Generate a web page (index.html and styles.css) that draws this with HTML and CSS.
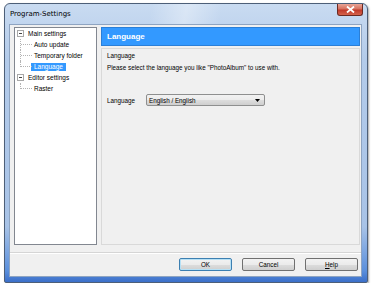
FILE: index.html
```html
<!DOCTYPE html>
<html lang="en">
<head>
    <meta charset="UTF-8">
    <title>Program-Settings</title>
    <link rel="stylesheet" href="styles.css">
</head>
<body>
    <div class="window">
        <!-- Title bar -->
        <div class="titlebar">
            <span class="title">Program-Settings</span>
            <span class="close">
                <svg width="9" height="7" viewBox="0 0 9 7"><path d="M1 0.5 L8 6.5 M8 0.5 L1 6.5" stroke="#fff" stroke-width="1.8"/></svg>
            </span>
        </div>

        <div class="client">
            <div class="main">
                <!-- Tree -->
                <div class="tree">
                    <div class="node"><span class="toggle"></span><span class="label">Main settings</span></div>
                    <div class="children">
                        <div class="child"><span class="label">Auto update</span></div>
                        <div class="child"><span class="label">Temporary folder</span></div>
                        <div class="child"><span class="label selected">Language</span></div>
                    </div>
                    <div class="node"><span class="toggle"></span><span class="label">Editor settings</span></div>
                    <div class="children">
                        <div class="child"><span class="label">Raster</span></div>
                    </div>
                </div>

                <!-- Page -->
                <div class="page">
                    <div class="banner">Language</div>
                    <div class="box">
                        <div class="group-title">Language</div>
                        <p class="hint">Please select the language you like "PhotoAlbum" to use with.</p>
                        <div class="field">
                            <span class="field-label">Language</span>
                            <div class="combo">
                                <span>English / English</span>
                                <svg width="5" height="3" viewBox="0 0 5 3"><path d="M0 0 H5 L2.5 3 Z" fill="#000"/></svg>
                            </div>
                        </div>
                    </div>
                </div>
            </div>

            <div class="footer">
                <button class="btn default">OK</button>
                <button class="btn">Cancel</button>
                <button class="btn"><u>H</u>elp</button>
            </div>
        </div>
    </div>
</body>
</html>
```

FILE: styles.css
```css
body {
    margin: 0;
    padding: 3px 0 0 4px;
    background: #ffffff;
    font-family: "Liberation Sans", Arial, sans-serif;
    overflow: hidden;
}

.window {
    width: 364px;
    height: 280px;
    box-sizing: border-box;
    padding: 0 5px 5px 4px;
    border: 1px solid #4d5f78;
    border-radius: 6px 6px 2px 2px;
    background: linear-gradient(180deg, #c9dbf1 0%, #b3cbea 20%, #a8c3e7 80%, #5a8fdc 96%, #3b6fc9 100%);
    box-shadow: 1px 1px 2px rgba(0, 0, 0, 0.35);
    display: flex;
    flex-direction: column;
}

.titlebar {
    height: 20px;
    display: flex;
    align-items: flex-start;
    justify-content: space-between;
    background: linear-gradient(100deg, transparent 40%, rgba(255, 255, 255, 0.35) 50%, transparent 60%);
}

.title {
    font-family: "DejaVu Sans", sans-serif;
    font-size: 7px;
    color: #000;
    margin-top: 6px;
    margin-left: 1px;
}

.close {
    width: 26px;
    height: 12px;
    margin-right: -1px;
    box-sizing: border-box;
    border: 1px solid #6b2a22;
    border-top: none;
    border-radius: 0 0 3px 3px;
    background: linear-gradient(180deg, #e8a597 0%, #d7705d 45%, #c0392a 55%, #d5634c 100%);
    display: flex;
    align-items: center;
    justify-content: center;
}

.client {
    flex: 1;
    background: #f0f0f0;
    border: 1px solid #8ea4c1;
    display: flex;
    flex-direction: column;
}

.main {
    display: flex;
    gap: 4px;
    padding: 2px 1px 0 4px;
    height: 218px;
}

.tree {
    width: 83px;
    box-sizing: border-box;
    background: #ffffff;
    border: 1px solid #828790;
    font-size: 6.5px;
    color: #000;
}

.node {
    height: 11px;
    display: flex;
    align-items: center;
}

.toggle {
    width: 7px;
    height: 7px;
    box-sizing: border-box;
    border: 1px solid #a8a8a8;
    margin-left: 2px;
    margin-right: 3px;
    position: relative;
    background: #fff;
}

.toggle::after {
    content: '';
    position: absolute;
    left: 1px;
    top: 2px;
    width: 3px;
    height: 1px;
    background: #444;
}

.children {
    padding-left: 5px;
}

.child {
    height: 11px;
    display: flex;
    align-items: center;
    padding-left: 14px;
    position: relative;
}

.child::before {
    content: '';
    position: absolute;
    left: 0;
    top: 0;
    height: 100%;
    border-left: 1px dotted #b4b4b4;
}

.child:last-child::before {
    height: 50%;
}

.child::after {
    content: '';
    position: absolute;
    left: 1px;
    top: 5px;
    width: 11px;
    border-top: 1px dotted #b4b4b4;
}

.label {
    white-space: nowrap;
    line-height: 8px;
    padding: 0 1px;
}

.child .label {
    margin-left: -3px;
    padding: 0 3px;
}

.selected {
    background: #3399ff;
    color: #fff;
}

.page {
    flex: 1;
    display: flex;
    flex-direction: column;
    gap: 2px;
}

.banner {
    height: 19px;
    box-sizing: border-box;
    background: #3399ff;
    border: 1px solid #2a7fd8;
    color: #fff;
    font-weight: bold;
    font-size: 8px;
    padding: 4px 0 0 5px;
}

.box {
    flex: 1;
    border: 1px solid #d9d9d9;
    padding: 2px 5px;
    font-size: 6.3px;
    color: #000;
}

.group-title {
    margin-top: 1px;
}

.hint {
    margin: 5px 0 0;
}

.field {
    display: flex;
    align-items: center;
    margin-top: 23px;
}

.field-label {
    width: 39px;
}

.combo {
    width: 119px;
    height: 12px;
    box-sizing: border-box;
    border: 1px solid #8e8f8f;
    border-radius: 2px;
    background: linear-gradient(180deg, #f2f2f2 0%, #ebebeb 50%, #dddddd 51%, #cfcfcf 100%);
    display: flex;
    align-items: center;
    justify-content: space-between;
    padding: 0 4px 0 2px;
}

.footer {
    flex: 1;
    margin-top: 7px;
    border-top: 1px solid #d5d5d5;
    box-shadow: inset 0 1px 0 #ffffff;
    display: flex;
    justify-content: flex-end;
    align-items: flex-start;
    gap: 10px;
    padding: 5px 3px 0 0;
}

.btn {
    width: 53px;
    height: 13px;
    padding: 0;
    font-family: "Liberation Sans", Arial, sans-serif;
    font-size: 6.3px;
    color: #000;
    border: 1px solid #707070;
    border-radius: 2px;
    background: linear-gradient(180deg, #f2f2f2 0%, #ebebeb 50%, #dddddd 51%, #cfcfcf 100%);
}

.btn.default {
    border-color: #3c7fb1;
    box-shadow: inset 0 0 0 1px #b6e0f5;
}
```
